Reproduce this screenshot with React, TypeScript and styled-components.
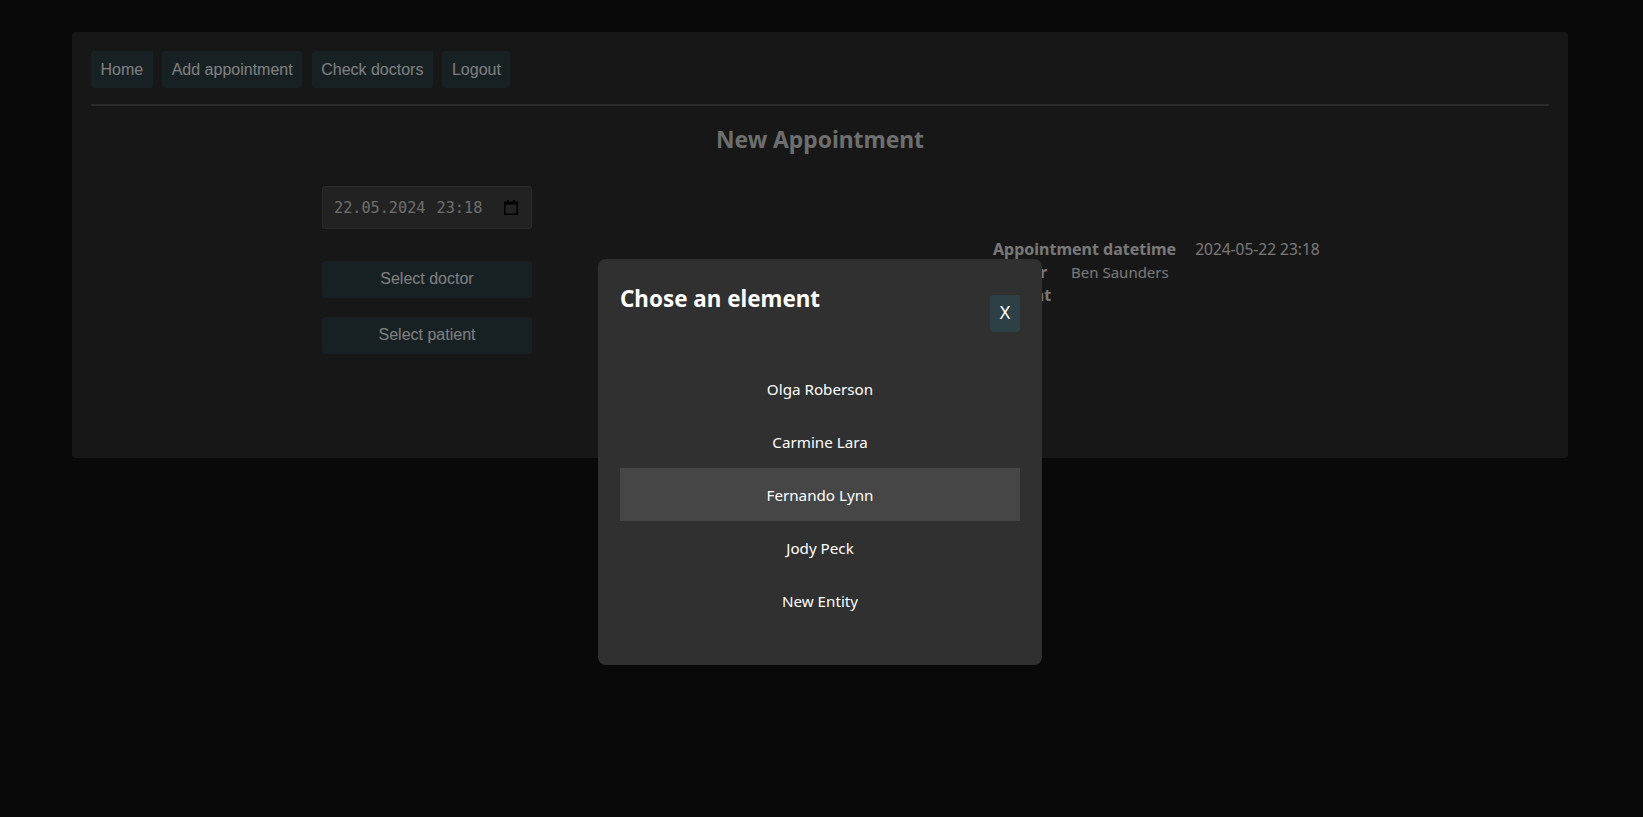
import React from "react";
import styled, { createGlobalStyle } from "styled-components";

const GlobalStyle = createGlobalStyle`
  html, body {
    margin: 0;
    padding: 0;
    height: 100%;
    background: #121212;
  }
  #root {
    height: 100%;
  }
`;

const links = ["Home", "Add appointment", "Check doctors", "Logout"];
const elements = [
  "Olga Roberson",
  "Carmine Lara",
  "Fernando Lynn",
  "Jody Peck",
  "New Entity",
];

function CalendarIcon() {
  return (
    <svg width="14" height="15" viewBox="0 0 14 15" aria-hidden="true">
      <path d="M3 0h2v1.5h4V0h2v1.5h2a1 1 0 0 1 1 1V14a1 1 0 0 1-1 1H1a1 1 0 0 1-1-1V2.5a1 1 0 0 1 1-1h2z" fill="#000" />
      <rect x="1.5" y="4.5" width="11" height="9" fill="#444" />
    </svg>
  );
}

function App() {
  return (
    <>
      <GlobalStyle />
      <Panel>
        <Nav>
          {links.map((link) => (
            <NavButton key={link}>{link}</NavButton>
          ))}
        </Nav>
        <Divider />
        <Title>New Appointment</Title>
        <Content>
          <Form>
            <DateField>
              <span>22.05.2024 23:18</span>
              <CalendarIcon />
            </DateField>
            <SelectButton $gap={32}>Select doctor</SelectButton>
            <SelectButton $gap={19}>Select patient</SelectButton>
          </Form>
          <Summary>
            <SummaryRow $gap={19}>
              <SummaryLabel>Appointment datetime</SummaryLabel>
              <span>2024-05-22 23:18</span>
            </SummaryRow>
            <SummaryRow $gap={24}>
              <SummaryLabel>Doctor</SummaryLabel>
              <SummaryValue>Ben Saunders</SummaryValue>
            </SummaryRow>
            <SummaryRow $gap={24}>
              <SummaryLabel>Patient</SummaryLabel>
            </SummaryRow>
          </Summary>
        </Content>
      </Panel>
      <Overlay>
        <Modal>
          <ModalHeader>
            <ModalTitle>Chose an element</ModalTitle>
            <CloseButton>X</CloseButton>
          </ModalHeader>
          <List>
            {elements.map((name) => (
              <ListItem key={name} $active={name === "Fernando Lynn"}>
                {name}
              </ListItem>
            ))}
          </List>
        </Modal>
      </Overlay>
    </>
  );
}

export default App;

const uiFont = `"Noto Sans", "Open Sans", sans-serif`;

const Panel = styled.div`
  box-sizing: border-box;
  width: 1496px;
  height: 426px;
  margin: 0 0 0 72px;
  position: relative;
  top: 32px;
  padding: 19px;
  background: #2e2e2e;
  border-radius: 4px;
  color: #fff;
  font-family: ${uiFont};
`;

const Nav = styled.nav`
  display: flex;
  gap: 9.5px;
`;

const NavButton = styled.button`
  height: 37px;
  padding: 0 9.5px;
  border: 0;
  border-radius: 3px;
  background: #2e4044;
  color: #fff;
  font-family: "Liberation Sans", Arial, sans-serif;
  font-size: 16px;
`;

const Divider = styled.hr`
  height: 2px;
  margin: 16px 0 0;
  border: 0;
  background: #555;
`;

const Title = styled.h2`
  margin: 18px 0 0;
  font-size: 22.8px;
  line-height: 32px;
  font-weight: 700;
  text-align: center;
  color: #ddd;
`;

const Content = styled.div`
  display: flex;
  margin-top: 30px;
  padding-left: 231px;
`;

const Form = styled.div`
  display: flex;
  flex-direction: column;
  width: 210px;
`;

const DateField = styled.div`
  box-sizing: border-box;
  display: flex;
  align-items: center;
  justify-content: space-between;
  height: 43px;
  padding: 0 13px 0 11px;
  border: 1px solid #555;
  border-radius: 3px;
  background: #444;
  color: #ddd;
  font-family: "DejaVu Sans Mono", "Liberation Mono", monospace;
  font-size: 15.2px;
  word-spacing: 2px;
`;

const SelectButton = styled.button<{ $gap: number }>`
  height: 37px;
  margin-top: ${(props) => props.$gap}px;
  padding: 0 0 1px;
  border: 0;
  border-radius: 3px;
  background: #2e4044;
  color: #fff;
  font-family: "Liberation Sans", Arial, sans-serif;
  font-size: 16px;
`;

const Summary = styled.div`
  margin: 52px 0 0 461px;
  font-size: 15.5px;
  line-height: 23px;
  color: #f0f0f0;
`;

const SummaryRow = styled.div<{ $gap: number }>`
  display: flex;
  gap: ${(props) => props.$gap}px;
`;

const SummaryLabel = styled.span`
  font-size: 16px;
  font-weight: 700;
`;

const SummaryValue = styled.span`
  font-size: 15px;
`;

const Overlay = styled.div`
  position: fixed;
  inset: 0;
  box-sizing: border-box;
  padding: 259px 0 0 598px;
  background: rgba(0, 0, 0, 0.5);
  font-family: ${uiFont};
`;

const Modal = styled.div`
  box-sizing: border-box;
  width: 444px;
  height: 406px;
  padding: 22px;
  background: #303030;
  border-radius: 8px;
  color: #fff;
`;

const ModalHeader = styled.div`
  display: flex;
  justify-content: space-between;
  align-items: flex-start;
  height: 81px;
`;

const ModalTitle = styled.h2`
  margin: 2px 0 0;
  font-size: 22.4px;
  line-height: 32px;
  font-weight: 700;
`;

const CloseButton = styled.button`
  width: 30px;
  height: 37px;
  margin-top: 14px;
  padding: 0 0 3px;
  border: 0;
  border-radius: 3px;
  background: #2c4046;
  color: #fff;
  font-family: ${uiFont};
  font-size: 18px;
`;

const List = styled.div`
  display: flex;
  flex-direction: column;
`;

const ListItem = styled.div<{ $active: boolean }>`
  height: 53px;
  line-height: 55px;
  text-align: center;
  font-size: 15.2px;
  background: ${(props) => (props.$active ? "#464646" : "transparent")};
`;
